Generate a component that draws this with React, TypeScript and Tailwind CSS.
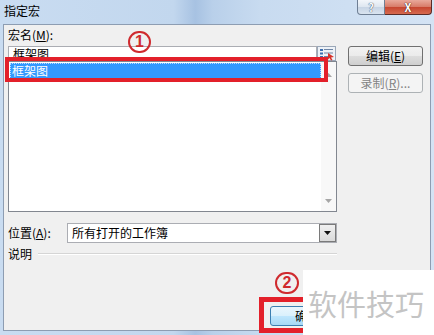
import React from "react";

function ListIcon() {
  return (
    <svg width="19" height="15" viewBox="0 0 19 15">
      <rect x="0.5" y="0.5" width="18" height="14" fill="#eef2f7" stroke="#9aa7b8" />
      <rect x="3" y="3" width="3" height="2" fill="#3c6fb0" />
      <rect x="7" y="3" width="9" height="1" fill="#6f86a6" />
      <rect x="3" y="6.5" width="3" height="2" fill="#3c6fb0" />
      <rect x="7" y="6.5" width="9" height="1" fill="#6f86a6" />
      <rect x="3" y="10" width="3" height="2" fill="#3c6fb0" />
      <rect x="7" y="10" width="5" height="1" fill="#6f86a6" />
      <path d="M11 7 L17 11 L14 11.5 L15.5 14 L14 14.5 L12.5 12 L11 13.5 Z" fill="#d6332a" />
    </svg>
  );
}

function Tri({ color = "#a6a6a6", up = false }: { color?: string; up?: boolean }) {
  return (
    <svg width="7" height="4" viewBox="0 0 7 4">
      <path d={up ? "M0 4 L7 4 L3.5 0 Z" : "M0 0 L7 0 L3.5 4 Z"} fill={color} />
    </svg>
  );
}

export default function App() {
  return (
    <div className="relative w-[434px] h-[335px] overflow-hidden bg-[linear-gradient(90deg,#c9dcf1_0%,#c2d7ee_40%,#a7c2e2_45%,#b9d0ea_49%,#c8dbf0_60%,#d4e3f4_100%)] text-[12px] leading-[16px] text-black font-['Noto_Sans_CJK_SC','Noto_Sans',sans-serif]">
      {/* title bar */}
      <div className="h-[24px] flex justify-between items-start">
        <span className="ml-[4px] mt-[3px] leading-[16px] text-[12px]">指定宏</span>
        <div className="flex mr-[2px]">
          <div className="w-[28px] h-[15px] flex items-center justify-center rounded-bl-[4px] border border-t-0 border-[#6f7f94] bg-[linear-gradient(180deg,#f3f6fa_0%,#dde6f0_50%,#c7d4e4_51%,#d9e4f0_100%)] text-[11px] leading-[12px] font-bold text-[#f8fbff] [text-shadow:0_0_1px_#3d4b5e,0_0_1px_#3d4b5e]">?</div>
          <div className="w-[47px] h-[15px] flex items-center justify-center rounded-br-[4px] border border-l-0 border-t-0 border-[#5b2b26] bg-[linear-gradient(180deg,#e9a99b_0%,#d77a67_50%,#c6452f_51%,#d66a4f_100%)] text-[11px] leading-[12px] font-bold text-white [text-shadow:0_0_1px_#4a1a14,0_0_1px_#4a1a14]">X</div>
        </div>
      </div>

      {/* body */}
      <div className="ml-[3px] w-[428px] h-[307px] border border-[#8d9db2] bg-[#f0f0f0] flex flex-col pl-[4px] pt-[1px] pb-[4px]">
        <div className="flex">
          {/* left column */}
          <div className="w-[329px] flex flex-col">
            <div className="h-[18px] leading-[18px]">
              宏名(<span className="underline">M</span>):
            </div>
            <div className="mt-[2px] flex h-[15px]">
              <div className="w-[309px] h-[15px] bg-white border border-[#abadb3] border-b-0 pl-[4px] leading-[14px]">框架图</div>
              <div className="w-[19px] h-[15px]">
                <ListIcon />
              </div>
            </div>
            <div className="h-[151px] bg-white border border-[#828790] flex">
              <div className="flex-1 pt-px pl-px">
                <div className="h-[16px] w-[311px] bg-[#3399ff] text-white leading-[16px] pl-[2px] outline-1 outline-dotted outline-[#bcdcff] -outline-offset-1">
                  框架图
                </div>
              </div>
              <div className="w-[15px] bg-[#f8f8f8] flex flex-col items-center justify-between pt-[11px] pb-[8px]">
                <Tri up />
                <Tri />
              </div>
            </div>
            <div className="mt-[11px] flex items-center h-[20px]">
              <div className="w-[59px] leading-[16px]">
                位置(<span className="underline">A</span>):
              </div>
              <div className="w-[270px] h-[20px] bg-white border border-[#abadb3] flex">
                <div className="flex-1 pl-[4px] leading-[18px]">所有打开的工作簿</div>
                <div className="w-[17px] h-[18px] border border-[#7a7a7a] bg-[linear-gradient(180deg,#f0f0f0,#dadada)] flex items-center justify-center">
                  <Tri color="#111" />
                </div>
              </div>
            </div>
            <div className="mt-[3px] h-[16px] flex items-center">
              <span className="leading-[16px]">说明</span>
              <div className="ml-[6px] flex-1 h-[2px] border-t border-[#d5d5d5] border-b border-b-white" />
            </div>
          </div>
          {/* right column */}
          <div className="ml-[11px] w-[75px] pt-[20px] flex flex-col gap-[7px]">
            <div className="h-[20px] rounded-[3px] border border-[#707070] bg-[linear-gradient(180deg,#f2f2f2_0%,#ebebeb_50%,#dddddd_51%,#cfcfcf_100%)] flex items-center justify-center leading-[16px]">
              编辑(<span className="underline">E</span>)
            </div>
            <div className="h-[20px] rounded-[3px] border border-[#adb2b5] bg-[#f4f4f4] flex items-center justify-center leading-[16px] text-[#838383]">
              录制(<span className="underline">R</span>)...
            </div>
          </div>
        </div>
        {/* bottom buttons */}
        <div className="mt-auto flex pl-[262px]">
          <div className="w-[75px] h-[20px] rounded-[3px] border border-[#3c7fb1] bg-[linear-gradient(180deg,#eaf6fd_0%,#d9f0fc_50%,#bee6fd_51%,#a7d9f5_100%)] flex items-center pl-[24px] leading-[16px]">
            确定
          </div>
        </div>
      </div>

      {/* annotations */}
      <div className="absolute left-[5px] top-[57px] w-[323px] h-[25px] border-[4px] border-[#e3202a]" />
      <div className="absolute left-[128px] top-[31px] w-[23px] h-[22px] rounded-full border-2 border-[#cf2a2e] flex items-center justify-center text-[16px] leading-[16px] font-bold text-[#cf2a2e] font-['Liberation_Sans',sans-serif]">
        1
      </div>
      <div className="absolute left-[259px] top-[297px] w-[60px] h-[36px] border-[5px] border-[#e3202a]" />
      <div className="absolute left-[275px] top-[272px] w-[24px] h-[22px] rounded-full border-2 border-[#cf2a2e] flex items-center justify-center text-[16px] leading-[16px] font-bold text-[#cf2a2e] font-['Liberation_Sans',sans-serif]">
        2
      </div>
      <div className="absolute left-[303px] top-[270px] w-[131px] h-[65px] bg-white flex items-center pl-[5px]">
        <span className="text-[29px] leading-[32px] text-[#c4c4c4] whitespace-nowrap">软件技巧</span>
      </div>
    </div>
  );
}
